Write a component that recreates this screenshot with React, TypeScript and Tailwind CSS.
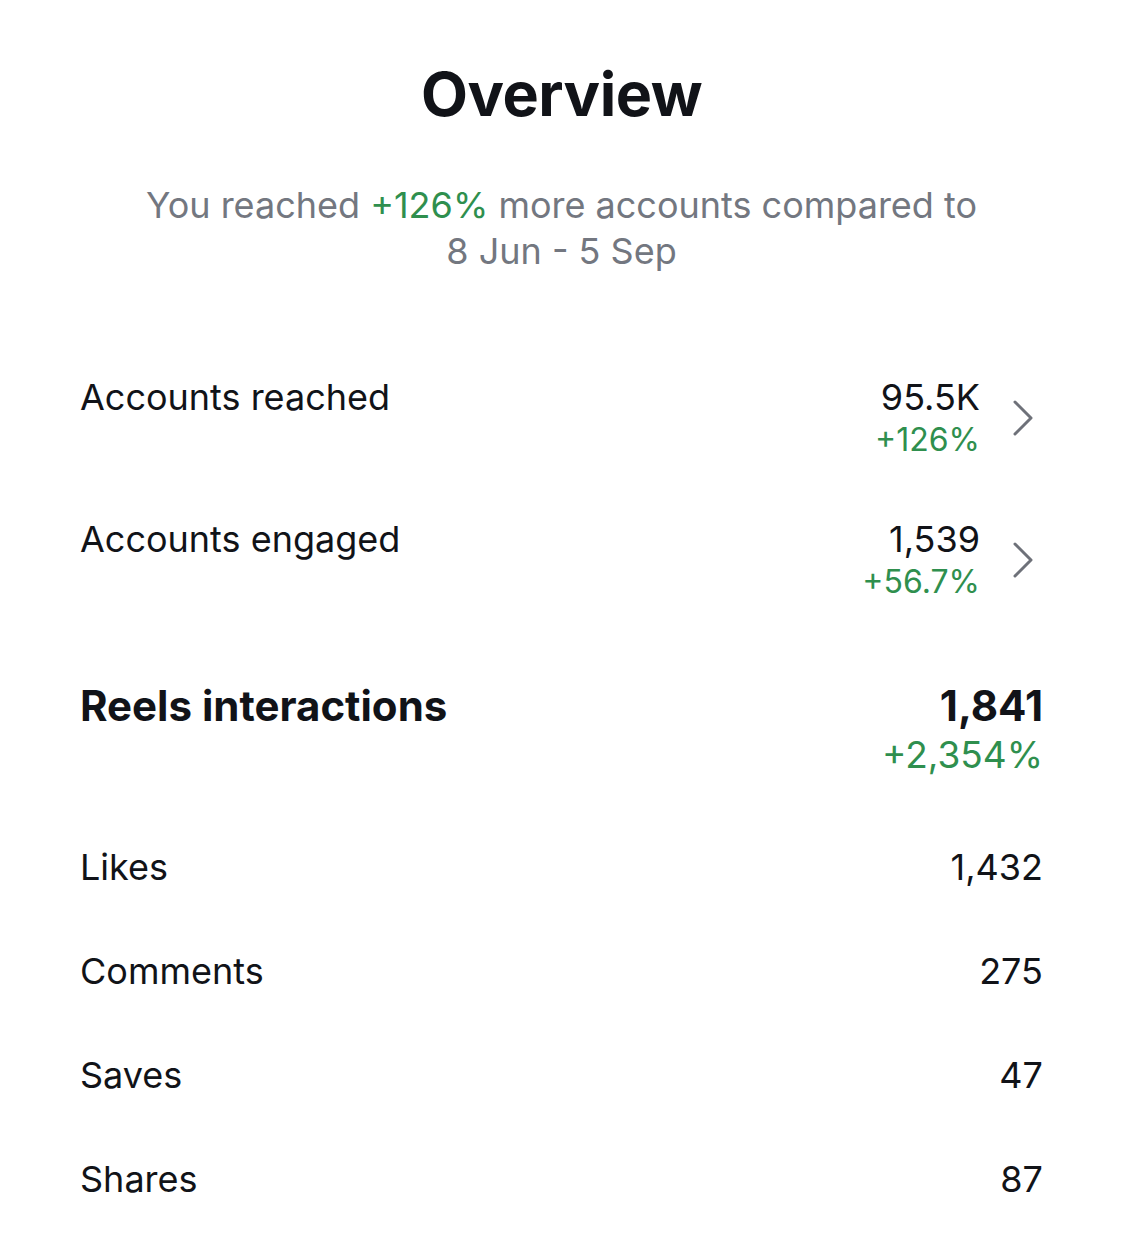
const font = { fontFamily: 'Inter, "Noto Sans", sans-serif' }

function Chevron() {
  return (
    <svg width="24" height="38" viewBox="0 0 24 38" fill="none" className="mr-[8px] shrink-0">
      <polyline points="4,3 20,19 4,35" stroke="#6e7179" strokeWidth="3" strokeLinecap="round" strokeLinejoin="round" />
    </svg>
  )
}

function MetricRow({ label, value, change }: { label: string; value: string; change: string }) {
  return (
    <div className="flex items-start justify-between">
      <div className="text-[36px] leading-[44px] text-[#111318]">{label}</div>
      <div className="flex items-center gap-[31px]">
        <div className="flex flex-col items-end">
          <div className="text-[36px] leading-[44px] text-[#111318]">{value}</div>
          <div className="text-[32px] leading-[42px] text-[#2f8f4e]">{change}</div>
        </div>
        <Chevron />
      </div>
    </div>
  )
}

function SimpleRow({ label, value }: { label: string; value: string }) {
  return (
    <div className="flex items-center justify-between h-[104px]">
      <div className="text-[36px] text-[#111318]">{label}</div>
      <div className="text-[36px] text-[#111318]">{value}</div>
    </div>
  )
}

export default function App() {
  return (
    <div className="w-[1126px] h-[1234px] bg-white pl-[80px] pr-[83px] pt-[56px]" style={font}>
      <h1 className="text-center text-[61px] leading-[76px] font-bold text-[#111318] tracking-[-0.5px]">Overview</h1>
      <p className="mt-[50px] text-center text-[36px] leading-[46px] text-[#737780]">
        You reached <span className="text-[#2f8f4e]">+126%</span> more accounts compared to
        <br />
        8 Jun - 5 Sep
      </p>

      <div className="mt-[101px] flex flex-col gap-[56px]">
        <MetricRow label="Accounts reached" value="95.5K" change="+126%" />
        <MetricRow label="Accounts engaged" value="1,539" change="+56.7%" />
      </div>

      <div className="mt-[78px] flex items-start justify-between">
        <div className="text-[42px] leading-[50px] font-bold text-[#111318]">Reels interactions</div>
        <div className="flex flex-col items-end">
          <div className="text-[42px] leading-[50px] font-bold text-[#111318]">1,841</div>
          <div className="text-[37px] leading-[48px] text-[#2f8f4e]">+2,354%</div>
        </div>
      </div>

      <div className="mt-[36px]">
        <SimpleRow label="Likes" value="1,432" />
        <SimpleRow label="Comments" value="275" />
        <SimpleRow label="Saves" value="47" />
        <SimpleRow label="Shares" value="87" />
      </div>
    </div>
  )
}
